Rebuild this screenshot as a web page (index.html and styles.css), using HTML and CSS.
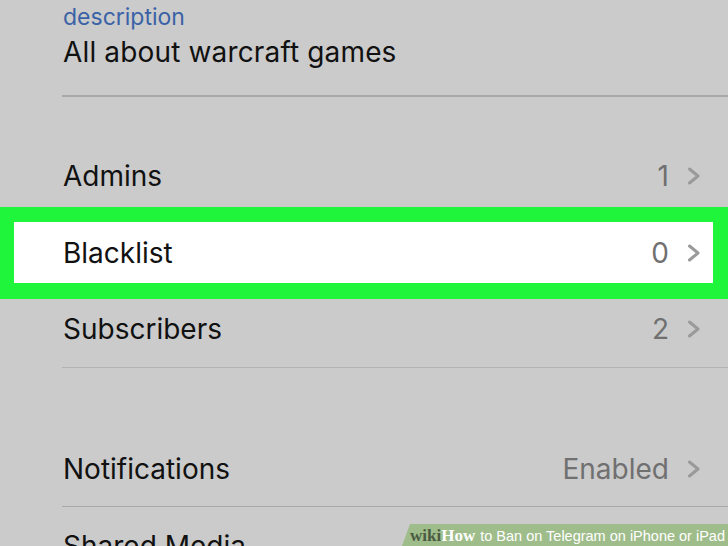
FILE: index.html
```html
<!DOCTYPE html>
<html lang="en">
<head>
  <meta charset="UTF-8" />
  <meta name="viewport" content="width=device-width, initial-scale=1.0" />
  <title>Channel Info</title>
  <link rel="stylesheet" href="styles.css">
</head>
<body>
  <div class="info">
    <div class="label">description</div>
    <div class="about">All about warcraft games</div>
  </div>

  <div class="group members">
    <div class="row">
      <span class="title">Admins</span>
      <span class="value">1</span>
      <svg class="chev" width="14" height="18" viewBox="0 0 14 18"><polyline points="2.5,2 11,9 2.5,16" /></svg>
    </div>
    <div class="row picked">
      <span class="mark"></span>
      <span class="title">Blacklist</span>
      <span class="value">0</span>
      <svg class="chev" width="14" height="18" viewBox="0 0 14 18"><polyline points="2.5,2 11,9 2.5,16" /></svg>
    </div>
    <div class="row last">
      <span class="title">Subscribers</span>
      <span class="value">2</span>
      <svg class="chev" width="14" height="18" viewBox="0 0 14 18"><polyline points="2.5,2 11,9 2.5,16" /></svg>
    </div>
  </div>

  <div class="group settings">
    <div class="row last">
      <span class="title">Notifications</span>
      <span class="value">Enabled</span>
      <svg class="chev" width="14" height="18" viewBox="0 0 14 18"><polyline points="2.5,2 11,9 2.5,16" /></svg>
    </div>
    <div class="row">
      <span class="title">Shared Media</span>
    </div>
  </div>

  <div class="banner">
    <span class="wiki">wiki</span><span class="how">How</span> to Ban on Telegram on iPhone or iPad
  </div>
</body>
</html>
```

FILE: styles.css
```css
html, body {
  margin: 0;
  height: 100%;
  overflow: hidden;
}
body {
  font-family: Inter, "Liberation Sans", Arial, sans-serif;
  background: #cbcbcb;
  color: #111;
  position: relative;
}
.info {
  margin-left: 62px;
  padding-left: 1px;
  padding-bottom: 25px;
  border-bottom: 2px solid #a9a9a9;
}
.label {
  height: 34px;
  line-height: 34px;
  font-size: 23px;
  color: #3a62a6;
}
.about {
  height: 36px;
  line-height: 36px;
  font-size: 28px;
  letter-spacing: 0.15px;
}
.group {
  margin-left: 62px;
}
.members {
  margin-top: 40px;
  border-bottom: 1px solid #b3b3b3;
}
.settings {
  margin-top: 63px;
}
.row {
  display: flex;
  align-items: center;
  height: 77px;
  padding: 0 27px 0 1px;
  box-sizing: border-box;
  font-size: 28px;
  position: relative;
}
.members .row.last {
  height: 76px;
}
.settings .row.last {
  height: 76px;
  border-bottom: 1px solid #a9a9a9;
}
.title {
  flex: 1;
  position: relative;
  z-index: 1;
}
.value {
  color: #707070;
  position: relative;
  z-index: 1;
}
.chev {
  margin-left: 18px;
  position: relative;
  z-index: 1;
}
.chev polyline {
  fill: none;
  stroke: #9a9a9a;
  stroke-width: 3;
  stroke-linecap: round;
  stroke-linejoin: round;
}
.mark {
  position: absolute;
  top: -7px;
  bottom: -8px;
  left: -62px;
  right: 0;
  background: #fff;
  border-style: solid;
  border-color: #1ff53a;
  border-width: 15px 15px 16px 14px;
  z-index: 0;
}
.banner {
  position: absolute;
  right: 0;
  bottom: 0;
  width: 326px;
  height: 22px;
  line-height: 23px;
  padding-left: 8px;
  box-sizing: border-box;
  background: #9fbd8b;
  clip-path: polygon(8px 0, 100% 0, 100% 100%, 0 100%);
  color: #fff;
  font-family: "Liberation Sans", Arial, sans-serif;
  font-size: 14.5px;
  white-space: nowrap;
  overflow: hidden;
}
.wiki, .how {
  font-family: "Liberation Serif", "Times New Roman", serif;
  font-weight: bold;
  font-size: 17px;
}
.wiki {
  color: #4b5b42;
}
.how {
  margin-right: 1px;
}
```
